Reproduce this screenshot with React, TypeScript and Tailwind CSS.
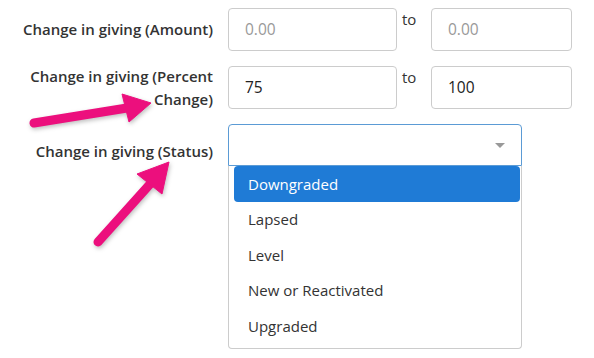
import React from 'react';

const statuses = ['Downgraded', 'Lapsed', 'Level', 'New or Reactivated', 'Upgraded'];

const Label: React.FC<{ children: React.ReactNode; className?: string }> = ({ children, className = '' }) => (
  <div className={`w-[228px] shrink-0 pr-[15px] text-right text-[15px] font-semibold leading-[23px] text-[#333] ${className}`}>
    {children}
  </div>
);

const NumberBox: React.FC<{ value?: string; placeholder?: string; width: string }> = ({ value, placeholder, width }) => (
  <div className={`${width} h-[43px] rounded-[4px] border border-[#ccc] bg-white px-4 flex items-center text-[15.5px]`}>
    {value ? <span className="text-[#222]">{value}</span> : <span className="text-[#999]">{placeholder}</span>}
  </div>
);

const RangeRow: React.FC<{ label: React.ReactNode; from?: string; to?: string }> = ({ label, from, to }) => (
  <div className="flex items-center h-[43px]">
    <Label>{label}</Label>
    <div className="flex items-start">
      <NumberBox width="w-[169px]" value={from} placeholder="0.00" />
      <div className="w-[34px] pl-[5px] text-[15px] leading-[22px] text-[#333]">to</div>
      <NumberBox width="w-[141px]" value={to} placeholder="0.00" />
    </div>
  </div>
);

const Arrows: React.FC = () => (
  <svg
    className="absolute left-0 top-0 pointer-events-none"
    width="594"
    height="358"
    viewBox="0 0 594 358"
    style={{ filter: 'drop-shadow(1px 2px 2px rgba(0,0,0,0.25))' }}
  >
    <g fill="#ec0f7d" stroke="#ec0f7d">
      <line x1="34" y1="123" x2="127" y2="108" strokeWidth="9" strokeLinecap="round" />
      <polygon points="122,94 151,103 129,122" strokeWidth="1" strokeLinejoin="round" />
      <line x1="98" y1="242" x2="151" y2="183" strokeWidth="9" strokeLinecap="round" />
      <polygon points="137,174 169,162 162,194" strokeWidth="1" strokeLinejoin="round" />
    </g>
  </svg>
);

export default function App() {
  return (
    <div className="relative w-[594px] h-[358px] bg-white overflow-hidden" style={{ fontFamily: '"Open Sans", "Noto Sans", sans-serif' }}>
      <div className="flex flex-col gap-[15px] pt-[8px]">
        <RangeRow label="Change in giving (Amount)" />
        <RangeRow label={<>Change in giving (Percent<br />Change)</>} from="75" to="100" />
        <div className="flex items-start">
          <Label className="pt-[16px]">Change in giving (Status)</Label>
          <div className="w-[294px]">
            <div className="h-[42px] rounded-t-[4px] border border-[#5b9bd5] bg-white flex items-center justify-end pr-[16px]">
              <div className="w-0 h-0 border-l-[5px] border-r-[5px] border-t-[5px] border-l-transparent border-r-transparent border-t-[#999]" />
            </div>
            <div className="rounded-b-[4px] border border-t-0 border-[#ccc] bg-white pl-[5px] pr-[1px] pb-[4px]">
              {statuses.map((s, i) => (
                <div
                  key={s}
                  className={`h-[35.5px] flex items-center pl-[14px] text-[15px] ${
                    i === 0 ? 'bg-[#1f7bd6] text-white rounded-[4px]' : 'text-[#333]'
                  }`}
                >
                  {s}
                </div>
              ))}
            </div>
          </div>
        </div>
      </div>
      <Arrows />
    </div>
  );
}
